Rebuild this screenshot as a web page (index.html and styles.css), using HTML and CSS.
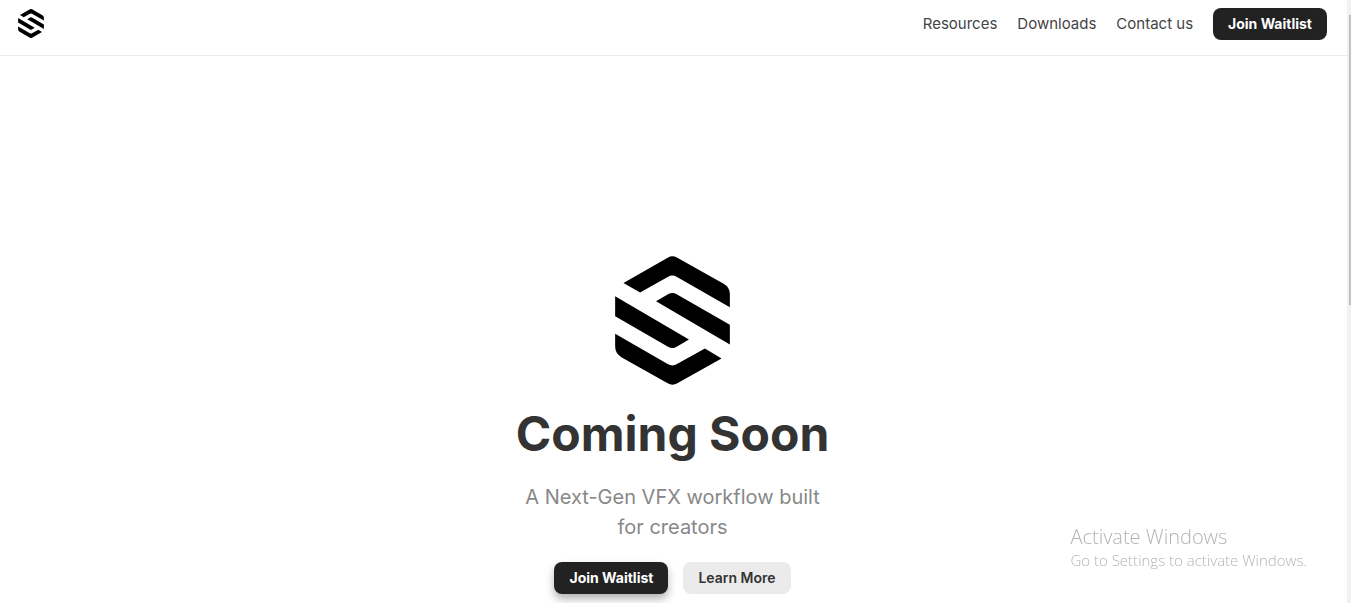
FILE: index.html
```html
<!DOCTYPE html>
<html lang="en">
<head>
    <meta charset="UTF-8">
    <meta name="viewport" content="width=device-width, initial-scale=1.0">
    <title>Coming Soon</title>
    <link rel="stylesheet" href="styles.css">
</head>
<body>
    <svg class="sprite" aria-hidden="true">
        <symbol id="logo" viewBox="45 32 345 388">
            <path d="M70 113 L203 37 Q217 29 232 37 L370 115 Q390 126 390 147 V186 L231 95 Q217 87 203 95 L120 142 Z"/>
            <path d="M168 168 L204 147 Q217 139 230 147 L390 239 V298 Z"/>
            <path d="M45 153 L267 283 L230 305 Q217 313 204 305 L45 213 Z"/>
            <path d="M45 266 L203 357 Q217 365 231 357 L315 310 L365 340 L232 415 Q217 423 203 415 L65 337 Q45 325 45 304 Z"/>
        </symbol>
    </svg>

    <header class="navbar">
        <a class="brand" href="#" aria-label="Home">
            <svg class="brand-logo"><use href="#logo"/></svg>
        </a>
        <nav class="nav-links">
            <a href="#">Resources</a>
            <a href="#">Downloads</a>
            <a href="#">Contact us</a>
            <button class="btn btn-dark" type="button">Join Waitlist</button>
        </nav>
    </header>

    <main class="hero">
        <svg class="hero-logo" aria-hidden="true"><use href="#logo"/></svg>
        <h1>Coming Soon</h1>
        <p class="tagline">A Next-Gen VFX workflow built for creators</p>
        <div class="actions">
            <button class="btn btn-dark raised" type="button">Join Waitlist</button>
            <button class="btn btn-light" type="button">Learn More</button>
        </div>
    </main>

    <aside class="watermark">
        <p class="watermark-title">Activate Windows</p>
        <p class="watermark-text">Go to Settings to activate Windows.</p>
    </aside>

    <div class="scrollbar" aria-hidden="true">
        <div class="scrollbar-thumb"></div>
    </div>
</body>
</html>
```

FILE: styles.css
```css
* {
    box-sizing: border-box;
}
body {
    margin: 0;
    padding-right: 4px;
    height: 100vh;
    overflow: hidden;
    background-color: #fff;
    color: #333;
    font-family: Inter, "Liberation Sans", sans-serif;
}
h1, p {
    margin: 0;
}
.sprite {
    position: absolute;
    width: 0;
    height: 0;
}

/* Navbar */
.navbar {
    display: flex;
    justify-content: space-between;
    padding: 8px 20px 15px 18px;
    border-bottom: 1px solid #ebebeb;
}
.brand {
    padding-top: 1px;
    color: #000;
}
.brand-logo {
    display: block;
    width: 26px;
    height: 29px;
    fill: currentColor;
}
.nav-links {
    display: flex;
    align-items: center;
    gap: 20px;
}
.nav-links a {
    padding-bottom: 2px;
    color: #444;
    font-size: 15px;
    text-decoration: none;
}

/* Buttons */
.btn {
    height: 32px;
    padding: 0 15px 2px;
    border: none;
    border-radius: 8px;
    font-family: inherit;
    font-size: 14px;
    cursor: pointer;
}
.btn-dark {
    background-color: #222;
    color: #fff;
    font-weight: 700;
}
.btn-light {
    background-color: #ebebeb;
    color: #333;
    font-weight: 600;
}
.raised {
    box-shadow: 0 5px 9px rgba(0, 0, 0, 0.3);
}

/* Hero */
.hero {
    display: flex;
    flex-direction: column;
    align-items: center;
    padding: 200px 2px 0 0;
    text-align: center;
}
.hero-logo {
    width: 115px;
    height: 129px;
    fill: #000;
}
.hero h1 {
    margin-top: 20px;
    font-size: 48px;
    font-weight: 700;
    line-height: 58px;
}
.tagline {
    max-width: 300px;
    margin-top: 19px;
    color: #888;
    font-size: 20px;
    line-height: 30px;
}
.actions {
    display: flex;
    gap: 15px;
    margin-top: 20px;
}

.watermark {
    position: fixed;
    right: 44px;
    bottom: 33px;
    color: #b4b4b4;
    font-family: "Open Sans", "Noto Sans", sans-serif;
    font-weight: 300;
}
.watermark-title {
    font-size: 20px;
    line-height: 26px;
}
.watermark-text {
    font-size: 15px;
    line-height: 20px;
}

.scrollbar {
    position: fixed;
    top: 0;
    right: 0;
    bottom: 0;
    width: 4px;
    padding: 15px 0 0 2px;
    background-color: #f1f1f1;
}
.scrollbar-thumb {
    height: 290px;
    background-color: #c1c1c1;
}
```
